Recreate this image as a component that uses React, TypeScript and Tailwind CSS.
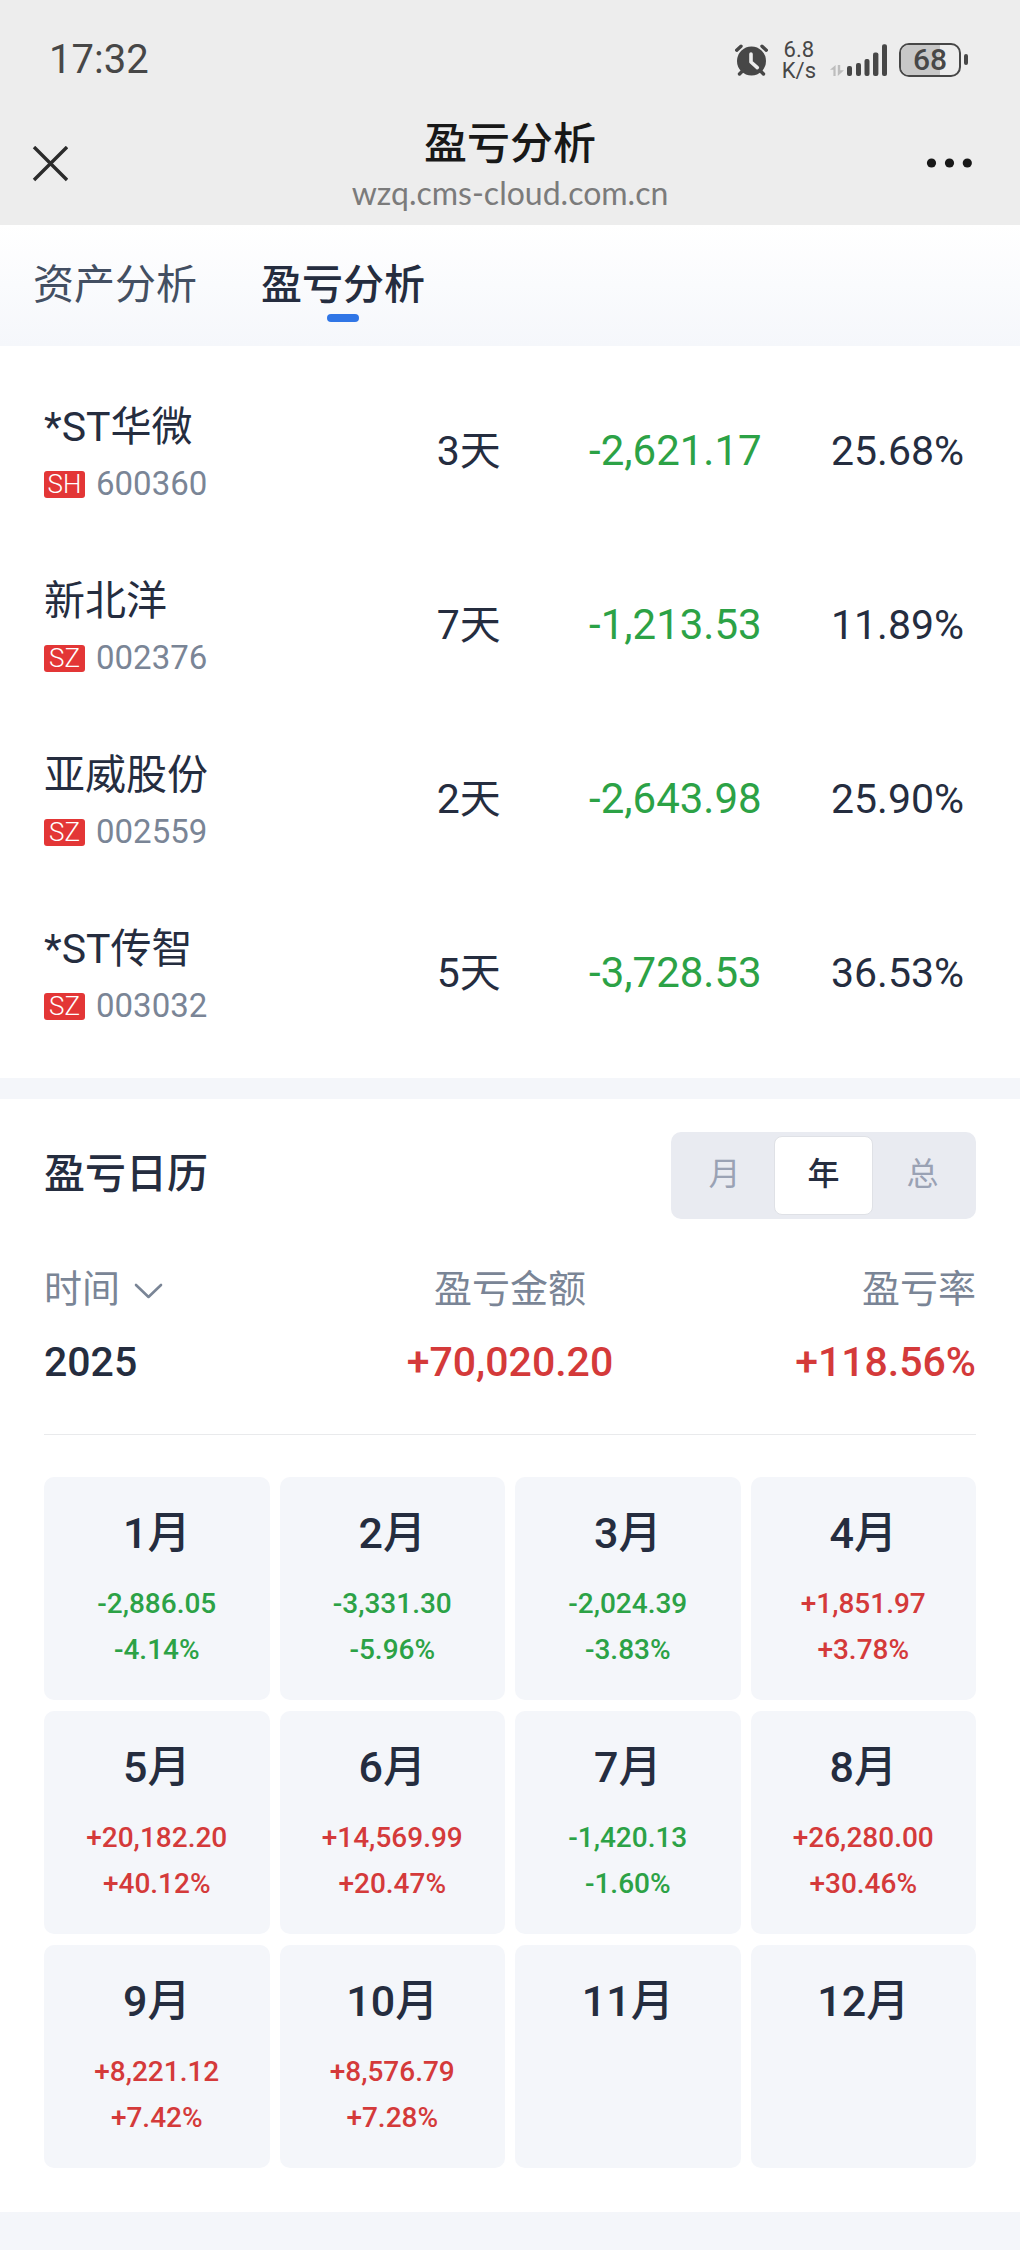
import { useState } from "react";

interface Holding {
  name: string;
  market: "SH" | "SZ";
  code: string;
  days: number;
  profit: string;
  rate: string;
}

interface MonthResult {
  month: number;
  profit?: string;
  rate?: string;
}

const holdings: Holding[] = [
  { name: "*ST华微", market: "SH", code: "600360", days: 3, profit: "-2,621.17", rate: "25.68%" },
  { name: "新北洋", market: "SZ", code: "002376", days: 7, profit: "-1,213.53", rate: "11.89%" },
  { name: "亚威股份", market: "SZ", code: "002559", days: 2, profit: "-2,643.98", rate: "25.90%" },
  { name: "*ST传智", market: "SZ", code: "003032", days: 5, profit: "-3,728.53", rate: "36.53%" },
];

const months: MonthResult[] = [
  { month: 1, profit: "-2,886.05", rate: "-4.14%" },
  { month: 2, profit: "-3,331.30", rate: "-5.96%" },
  { month: 3, profit: "-2,024.39", rate: "-3.83%" },
  { month: 4, profit: "+1,851.97", rate: "+3.78%" },
  { month: 5, profit: "+20,182.20", rate: "+40.12%" },
  { month: 6, profit: "+14,569.99", rate: "+20.47%" },
  { month: 7, profit: "-1,420.13", rate: "-1.60%" },
  { month: 8, profit: "+26,280.00", rate: "+30.46%" },
  { month: 9, profit: "+8,221.12", rate: "+7.42%" },
  { month: 10, profit: "+8,576.79", rate: "+7.28%" },
  { month: 11 },
  { month: 12 },
];

const tabs = ["资产分析", "盈亏分析"];
const periods = ["月", "年", "总"];

// red is up, green is down
function trendColor(value?: string) {
  return value?.startsWith("-") ? "text-[#2ca246]" : "text-[#d43a3a]";
}

function AlarmIcon() {
  return (
    <svg className="h-[33px] w-[33px]" viewBox="0 0 33 33" fill="none" strokeLinecap="round" aria-hidden="true">
      <circle cx="16.5" cy="18" r="14.5" fill="#474747" />
      <path d="M1.7 7.2 6 3.2M31.3 7.2 27 3.2" stroke="#474747" strokeWidth="3.4" />
      <path d="m4.5 31 4-4M28.5 31l-4-4" stroke="#474747" strokeWidth="3.4" />
      <path d="M16 11v8l6.3 5.6" stroke="#ededed" strokeWidth="3.6" strokeLinejoin="round" />
    </svg>
  );
}

function SignalIcon() {
  return (
    <svg className="h-[33px] w-[57px]" viewBox="0 0 57 33" fill="#474747" aria-hidden="true">
      <path d="M5.6 22v11H3.4v-6.2H0zM7.8 22v11l6.2-5.8h-3.8V22z" fill="#bdbdbd" />
      <rect x="17" y="23" width="5" height="10" rx="2" />
      <rect x="26" y="20" width="5" height="13" rx="2" />
      <rect x="34.5" y="16" width="5" height="17" rx="2" />
      <rect x="43" y="9.5" width="5.4" height="23.5" rx="2" />
      <rect x="52" y="1.3" width="5" height="31.7" rx="2" />
    </svg>
  );
}

function Battery({ level }: { level: number }) {
  return (
    <div className="flex items-center gap-[3px]">
      <div className="relative flex h-[34px] w-[62px] items-center justify-center overflow-hidden rounded-[10px] border-2 border-[#474747]">
        <div className="absolute inset-y-0 left-0 bg-[#c8c8c8]" style={{ width: `${level}%` }} />
        <span className="relative text-[30px] leading-[30px] font-medium">{level}</span>
      </div>
      <div className="h-[11px] w-1 rounded-sm bg-[#474747]" />
    </div>
  );
}

function StatusBar() {
  return (
    <div className="flex h-[119px] items-center justify-between pr-[52px] pl-[49px] text-[#474747]">
      <span className="text-[40px] leading-[50px]">17:32</span>
      <div className="flex items-center">
        <AlarmIcon />
        <div className="mx-3.5 text-center text-[22px] leading-[21px]">
          <div>6.8</div>
          <div>K/s</div>
        </div>
        <SignalIcon />
        <div className="ml-3">
          <Battery level={68} />
        </div>
      </div>
    </div>
  );
}

function NavBar() {
  return (
    <div className="grid grid-cols-[1fr_auto_1fr] items-center px-8 pb-3">
      <button type="button" aria-label="关闭" className="justify-self-start pb-1">
        <svg className="h-9 w-9" viewBox="0 0 36 36" fill="none" stroke="#2b2b2b" strokeWidth="3.4" aria-hidden="true">
          <path d="m2 1 33 33M35 1 2 34" />
        </svg>
      </button>
      <div className="flex flex-col items-center gap-1">
        <h1 className="text-[43px] leading-[50px] font-medium text-[#181818]">盈亏分析</h1>
        <p className="font-['Lato',sans-serif] text-[32px] leading-10 text-[#7b7b7b]">wzq.cms-cloud.com.cn</p>
      </div>
      <button type="button" aria-label="更多" className="justify-self-end pr-4 pb-1">
        <svg className="h-9 w-[46px]" viewBox="0 0 46 36" fill="#181818" aria-hidden="true">
          <circle cx="5.5" cy="17" r="4.6" />
          <circle cx="23.5" cy="17" r="4.6" />
          <circle cx="41.3" cy="17" r="4.6" />
        </svg>
      </button>
    </div>
  );
}

function HoldingsTable() {
  return (
    <section className="bg-white px-11 py-[18px]">
      <table aria-label="持仓盈亏" className="w-full table-fixed text-[41px] leading-[50px] text-[#252d3f]">
        <colgroup>
          <col className="w-[32%]" />
          <col className="w-[17%]" />
          <col className="w-[28%]" />
          <col className="w-[23%]" />
        </colgroup>
        <tbody>
          {holdings.map((item) => (
            <tr key={item.code}>
              <th scope="row" className="pt-[38px] pb-[34px] text-left font-normal">
                <div>{item.name}</div>
                <div className="mt-3 flex items-center gap-[11px] text-[33px] leading-10 text-[#7a8596]">
                  <span className="flex h-[27px] w-[41px] items-center justify-center rounded-[3px] bg-[#e33636] text-[26px] leading-[27px] font-light text-white">
                    {item.market}
                  </span>
                  <span>{item.code}</span>
                </div>
              </th>
              <td className="text-right">{item.days}天</td>
              <td className={`text-right text-[42px] ${trendColor(item.profit)}`}>{item.profit}</td>
              <td className="pr-3 text-right">{item.rate}</td>
            </tr>
          ))}
        </tbody>
      </table>
    </section>
  );
}

function PeriodSwitch() {
  const [period, setPeriod] = useState("年");

  return (
    <div className="flex rounded-[10px] bg-[#e9ebf1] p-1">
      {periods.map((item) => (
        <button
          key={item}
          type="button"
          aria-pressed={item === period}
          onClick={() => setPeriod(item)}
          className={`h-[79px] w-[99px] rounded-lg border pb-1 text-[32px] leading-10 ${
            item === period
              ? "border-[#dfe1e6] bg-white font-medium text-[#252d3f]"
              : "border-transparent text-[#9aa2b4]"
          }`}
        >
          {item}
        </button>
      ))}
    </div>
  );
}

function SummaryTable() {
  return (
    <table className="mt-[46px] w-full table-fixed border-b border-[#e9eaec]">
      <thead className="text-[38px] leading-[48px] text-[#7a8596]">
        <tr>
          <th scope="col" className="p-0 text-left font-normal">
            <button type="button" className="flex items-center gap-3.5">
              时间
              <svg className="mt-1 h-4 w-[29px]" viewBox="0 0 29 16" fill="none" stroke="#7a8596" strokeWidth="2.6" strokeLinecap="round" strokeLinejoin="round" aria-hidden="true">
                <path d="m2 2 12.5 12L27 2" />
              </svg>
            </button>
          </th>
          <th scope="col" className="p-0 text-center font-normal">盈亏金额</th>
          <th scope="col" className="p-0 text-right font-normal">盈亏率</th>
        </tr>
      </thead>
      <tbody className="text-[41px] leading-[48px] font-medium">
        <tr>
          <td className="pt-[25px] pb-12 text-[#252d3f]">2025</td>
          <td className="pt-[25px] pb-12 text-center text-[#d43a3a]">+70,020.20</td>
          <td className="pt-[25px] pb-12 text-right text-[#d43a3a]">+118.56%</td>
        </tr>
      </tbody>
    </table>
  );
}

function MonthCard({ month, profit, rate }: MonthResult) {
  return (
    <li className="rounded-[10px] bg-[#f4f6fa] pt-7 pb-[27px] text-center font-medium">
      <h3 className="text-[43px] leading-[56px] text-[#252d3f]">{month}月</h3>
      {profit && (
        <div className={`mt-5 text-[28px] leading-[46px] ${trendColor(profit)}`}>
          <p>{profit}</p>
          <p>{rate}</p>
        </div>
      )}
    </li>
  );
}

export default function App() {
  const [tab, setTab] = useState("盈亏分析");

  return (
    <div className="min-h-screen bg-[#f4f6fa] font-['Roboto','Noto_Sans_CJK_SC',sans-serif]">
      <header className="bg-[#ededed]">
        <StatusBar />
        <NavBar />
      </header>

      <nav className="flex gap-16 bg-linear-to-b from-white to-[#f5f7fb] px-[33px] pt-[35px] pb-6">
        {tabs.map((item) => (
          <button
            key={item}
            type="button"
            onClick={() => setTab(item)}
            className={`flex flex-col items-center gap-1 text-[41px] leading-[50px] ${
              item === tab ? "font-medium text-[#252d3f]" : "text-[#434f62]"
            }`}
          >
            {item}
            <span className={`h-2 w-8 rounded-full ${item === tab ? "bg-[#3076e6]" : "bg-transparent"}`} />
          </button>
        ))}
      </nav>

      <main className="flex flex-col gap-[21px]">
        <HoldingsTable />

        <section className="bg-white px-11 pt-[33px] pb-11">
          <div className="flex items-center justify-between">
            <h2 className="pb-1 text-[41px] leading-[50px] font-medium text-[#252d3f]">盈亏日历</h2>
            <PeriodSwitch />
          </div>
          <SummaryTable />
          <ul className="mt-[42px] grid grid-cols-4 gap-x-2.5 gap-y-[11px]">
            {months.map((item) => (
              <MonthCard key={item.month} {...item} />
            ))}
          </ul>
        </section>
      </main>
    </div>
  );
}
